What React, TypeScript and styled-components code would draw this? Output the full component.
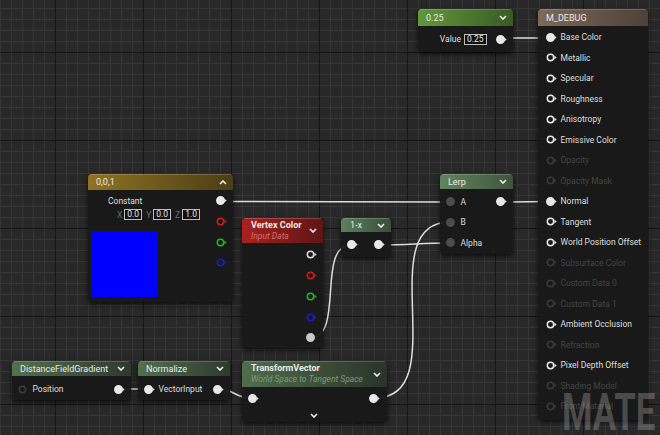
import React from "react";
import styled, { createGlobalStyle } from "styled-components";

const GlobalStyle = createGlobalStyle`
  html, body {
    margin: 0;
    padding: 0;
    background: #262626;
  }
  body {
    font-family: Roboto, "Noto Sans", "Liberation Sans", sans-serif;
  }
`;

const Canvas = styled.div`
  position: relative;
  width: 660px;
  height: 435px;
  overflow: hidden;
  background-color: #282828;
  background-image: linear-gradient(to right, #151515 1px, transparent 1px),
    linear-gradient(to bottom, #151515 1px, transparent 1px),
    linear-gradient(to right, #353535 1px, transparent 1px),
    linear-gradient(to bottom, #353535 1px, transparent 1px);
  background-size: 88px 88px, 88px 88px, 11px 11px, 11px 11px;
  background-position: 55px 0, 0 52px, 0 0, 0 8px;
`;

const Wires = styled.svg`
  position: absolute;
  left: 0;
  top: 0;
  width: 660px;
  height: 435px;
`;

interface NodeProps {
  $x: number;
  $y: number;
  $w: number;
  $h: number;
}
const Node = styled.div<NodeProps>`
  position: absolute;
  left: ${(p) => p.$x}px;
  top: ${(p) => p.$y}px;
  width: ${(p) => p.$w}px;
  height: ${(p) => p.$h}px;
  display: flex;
  flex-direction: column;
  background: rgba(25, 25, 25, 0.97);
  border-radius: 4px;
  box-shadow: 0 2px 5px rgba(0, 0, 0, 0.7);
  overflow: hidden;
  color: #dedede;
  font-size: 8.5px;
`;

interface HeaderProps {
  $from: string;
  $to: string;
  $h: number;
  $pad?: number;
}
const Header = styled.div<HeaderProps>`
  flex: none;
  height: ${(p) => p.$h}px;
  display: flex;
  align-items: center;
  justify-content: space-between;
  padding: 0 6px 0 ${(p) => p.$pad ?? 8}px;
  background: linear-gradient(to right, ${(p) => p.$from}, ${(p) => p.$to});
  box-shadow: inset 0 1px 0 rgba(255, 255, 255, 0.18);
  color: #eaeaea;
  font-size: 9px;
`;

const TitleBlock = styled.div`
  display: flex;
  flex-direction: column;
  line-height: 11px;
`;

const Title = styled.span`
  font-weight: 700;
`;

const Subtitle = styled.span<{ $color: string }>`
  font-style: italic;
  font-size: 8.5px;
  color: ${(p) => p.$color};
`;

const Body = styled.div<{ $pad: string }>`
  flex: 1;
  display: flex;
  flex-direction: column;
  padding: ${(p) => p.$pad};
`;

const PinRow = styled.div<{ $h: number; $dim?: boolean; $align?: string }>`
  height: ${(p) => p.$h}px;
  flex: none;
  display: flex;
  align-items: center;
  justify-content: ${(p) => p.$align ?? "flex-start"};
  gap: 4px;
  color: ${(p) => (p.$dim ? "#444444" : "#dedede")};
  white-space: nowrap;
`;

const Side = styled.div`
  display: flex;
  align-items: center;
  gap: 4px;
`;

const PinSvg = styled.svg`
  flex: none;
  display: block;
`;

const ValueBox = styled.span`
  display: inline-block;
  border: 1px solid #bdbdbd;
  background: #111;
  color: #e6e6e6;
  padding: 0 2px;
  line-height: 9px;
  font-size: 8.5px;
`;

const ValueField = styled.span<{ $gap: number }>`
  display: inline-flex;
  align-items: center;
  gap: ${(p) => p.$gap}px;
`;

const AxisLabel = styled.span`
  color: #6c6c6c;
`;

const ConstantBody = styled.div`
  flex: 1;
  display: flex;
  justify-content: space-between;
  padding: 0 6.5px 0 3px;
`;

const ConstantLeft = styled.div`
  display: flex;
  flex-direction: column;
`;

const ConstantLabel = styled.span`
  margin: 6px 0 0 17px;
  line-height: 11px;
`;

const AxisRow = styled.div`
  display: flex;
  align-items: center;
  gap: 4px;
  margin: 2px 0 0 26px;
`;

const Swatch = styled.div<{ $color: string }>`
  margin-top: 11px;
  width: 67px;
  height: 66px;
  background: ${(p) => p.$color};
`;

const PinColumn = styled.div<{ $pad: number }>`
  display: flex;
  flex-direction: column;
  align-items: flex-end;
  padding-top: ${(p) => p.$pad}px;
`;

const FooterChevron = styled.div`
  display: flex;
  justify-content: center;
  align-items: center;
  height: 13px;
`;

const Watermark = styled.div`
  position: absolute;
  left: 562px;
  top: 387px;
  font-family: Roboto, "Liberation Sans", sans-serif;
  font-weight: 700;
  font-size: 52px;
  line-height: 1;
  color: rgba(205, 205, 205, 0.28);
  transform: scaleX(0.67);
  transform-origin: left top;
  pointer-events: none;
`;

const WHITE = "#e8e8e8";

function Pin({
  color = WHITE,
  filled = false,
  arrow = true,
}: {
  color?: string;
  filled?: boolean;
  arrow?: boolean;
}) {
  return (
    <PinSvg width="11" height="9" viewBox="0 0 11 9">
      <circle
        cx="4.5"
        cy="4.5"
        r={filled ? 3.7 : 3.2}
        fill={filled ? color : "none"}
        stroke={color}
        strokeWidth="1.5"
      />
      {arrow && <path d="M8.4 2.6 L10.6 4.5 L8.4 6.4 Z" fill={color} />}
    </PinSvg>
  );
}

function Chevron({ up = false }: { up?: boolean }) {
  return (
    <svg width="8" height="5" viewBox="0 0 8 5">
      <path
        d={up ? "M1 4 L4 1 L7 4" : "M1 1 L4 4 L7 1"}
        fill="none"
        stroke="#f0f0f0"
        strokeWidth="1.6"
      />
    </svg>
  );
}

const outputs = [
  { label: "Base Color", on: true, linked: true },
  { label: "Metallic", on: true },
  { label: "Specular", on: true },
  { label: "Roughness", on: true },
  { label: "Anisotropy", on: true },
  { label: "Emissive Color", on: true },
  { label: "Opacity", on: false },
  { label: "Opacity Mask", on: false },
  { label: "Normal", on: true, linked: true },
  { label: "Tangent", on: true },
  { label: "World Position Offset", on: true },
  { label: "Subsurface Color", on: false },
  { label: "Custom Data 0", on: false },
  { label: "Custom Data 1", on: false },
  { label: "Ambient Occlusion", on: true },
  { label: "Refraction", on: false },
  { label: "Pixel Depth Offset", on: true },
  { label: "Shading Model", on: false },
  { label: "Front Material", on: false },
];

const wires = [
  "M500 38 L550 38",
  "M220 201.5 C300 201.5, 370 202, 450 202",
  "M500 202 L550 201.5",
  "M378 245 C410 245, 420 243, 450 243",
  "M310 338 C345 338, 316 245, 351 245",
  "M375 398 C455 398, 370 222, 450 222",
  "M118 389 L148 389",
  "M217 389 C236 389, 233 398, 252 398",
];

const DIM = "#3a3a3a";
const GREY = "#4c4c4c";

export default function App() {
  return (
    <>
      <GlobalStyle />
      <Canvas>
        <Wires viewBox="0 0 660 435">
          {wires.map((d) => (
            <path key={d} d={d} fill="none" stroke="#dcdcdc" strokeWidth="1.5" />
          ))}
        </Wires>

        {/* scalar parameter */}
        <Node $x={418} $y={9} $w={95} $h={43}>
          <Header $from="#62983a" $to="#3a5a25" $h={17}>
            <span>0.25</span>
            <Chevron />
          </Header>
          <Body $pad="0 6.5px 0 0">
            <PinRow $h={26} $align="flex-end" style={{ gap: 9 }}>
              <ValueField $gap={3}>
                Value <ValueBox>0.25</ValueBox>
              </ValueField>
              <Pin filled />
            </PinRow>
          </Body>
        </Node>

        {/* material result */}
        <Node $x={538} $y={9} $w={110} $h={411}>
          <Header $from="#7f6957" $to="#4d4139" $h={17}>
            <span>M_DEBUG</span>
          </Header>
          <Body $pad="1px 0 0 7.5px">
            {outputs.map((o) => (
              <PinRow key={o.label} $h={20.5} $dim={!o.on}>
                <Pin color={o.on ? WHITE : DIM} filled={o.linked} />
                {o.label}
              </PinRow>
            ))}
          </Body>
        </Node>

        {/* constant 3 vector */}
        <Node $x={88} $y={174} $w={145} $h={128}>
          <Header $from="#8f7322" $to="#4b3d16" $h={16}>
            <span>0,0,1</span>
            <Chevron up />
          </Header>
          <ConstantBody>
            <ConstantLeft>
              <ConstantLabel>Constant</ConstantLabel>
              <AxisRow>
                <ValueField $gap={2}>
                  <AxisLabel>X</AxisLabel>
                  <ValueBox>0.0</ValueBox>
                </ValueField>
                <ValueField $gap={2}>
                  <AxisLabel>Y</AxisLabel>
                  <ValueBox>0.0</ValueBox>
                </ValueField>
                <ValueField $gap={2}>
                  <AxisLabel>Z</AxisLabel>
                  <ValueBox>1.0</ValueBox>
                </ValueField>
              </AxisRow>
              <Swatch $color="#0000ff" />
            </ConstantLeft>
            <PinColumn $pad={0.5}>
              <PinRow $h={20.7}>
                <Pin filled />
              </PinRow>
              <PinRow $h={20.7}>
                <Pin color="#d01c1c" />
              </PinRow>
              <PinRow $h={20.7}>
                <Pin color="#1cb81c" />
              </PinRow>
              <PinRow $h={20.7}>
                <Pin color="#1c1cc8" />
              </PinRow>
            </PinColumn>
          </ConstantBody>
        </Node>

        {/* vertex color */}
        <Node $x={242} $y={218} $w={81} $h={130}>
          <Header $from="#a8221f" $to="#5e1515" $h={25} $pad={9}>
            <TitleBlock>
              <Title>Vertex Color</Title>
              <Subtitle $color="rgba(235,140,140,0.75)">Input Data</Subtitle>
            </TitleBlock>
            <Chevron />
          </Header>
          <Body $pad="1.6px 6.5px 0 0">
            <PinColumn $pad={0}>
              <PinRow $h={20.7}>
                <Pin color="#d8d8d8" />
              </PinRow>
              <PinRow $h={20.7}>
                <Pin color="#d01c1c" />
              </PinRow>
              <PinRow $h={20.7}>
                <Pin color="#1cb81c" />
              </PinRow>
              <PinRow $h={20.7}>
                <Pin color="#1c1cc8" />
              </PinRow>
              <PinRow $h={20.7}>
                <Pin color="#c8c8c8" filled arrow={false} />
              </PinRow>
            </PinColumn>
          </Body>
        </Node>

        {/* one minus */}
        <Node $x={341} $y={218} $w={50} $h={39}>
          <Header $from="#5d805a" $to="#3a4d39" $h={14} $pad={9}>
            <span>1-x</span>
            <Chevron />
          </Header>
          <Body $pad="0 6.5px 0 5.5px">
            <PinRow $h={25} $align="space-between">
              <Pin filled />
              <Pin filled />
            </PinRow>
          </Body>
        </Node>

        {/* lerp */}
        <Node $x={440} $y={174} $w={73} $h={80}>
          <Header $from="#62835e" $to="#3f553d" $h={15}>
            <span>Lerp</span>
            <Chevron />
          </Header>
          <Body $pad="2.7px 6.5px 0 5.5px">
            <PinRow $h={20.5} $align="space-between">
              <Side>
                <Pin color={GREY} filled arrow={false} />A
              </Side>
              <Pin filled />
            </PinRow>
            <PinRow $h={20.5}>
              <Pin color={GREY} filled arrow={false} />B
            </PinRow>
            <PinRow $h={20.5}>
              <Pin color={GREY} filled arrow={false} />
              Alpha
            </PinRow>
          </Body>
        </Node>

        {/* distance field gradient */}
        <Node $x={12} $y={361} $w={119} $h={39}>
          <Header $from="#52704e" $to="#2e392e" $h={15}>
            <span>DistanceFieldGradient</span>
            <Chevron />
          </Header>
          <Body $pad="1px 6.5px 0 5.5px">
            <PinRow $h={24} $align="space-between">
              <Side>
                <Pin color="#3c3c3c" arrow={false} />
                Position
              </Side>
              <Pin filled />
            </PinRow>
          </Body>
        </Node>

        {/* normalize */}
        <Node $x={138} $y={361} $w={92} $h={39}>
          <Header $from="#52704e" $to="#2e392e" $h={15}>
            <span>Normalize</span>
            <Chevron />
          </Header>
          <Body $pad="1px 6.5px 0 5.5px">
            <PinRow $h={24} $align="space-between">
              <Side>
                <Pin filled />
                VectorInput
              </Side>
              <Pin filled />
            </PinRow>
          </Body>
        </Node>

        {/* transform vector */}
        <Node $x={242} $y={361} $w={145} $h={61}>
          <Header $from="#4f6d4b" $to="#2a332a" $h={26} $pad={9}>
            <TitleBlock>
              <Title>TransformVector</Title>
              <Subtitle $color="#7f9c76">World Space to Tangent Space</Subtitle>
            </TitleBlock>
            <Chevron />
          </Header>
          <Body $pad="0 7.5px 0 5.5px">
            <PinRow $h={22} $align="space-between">
              <Pin filled />
              <Pin filled />
            </PinRow>
            <FooterChevron>
              <Chevron />
            </FooterChevron>
          </Body>
        </Node>

        <Watermark>MATE</Watermark>
      </Canvas>
    </>
  );
}
